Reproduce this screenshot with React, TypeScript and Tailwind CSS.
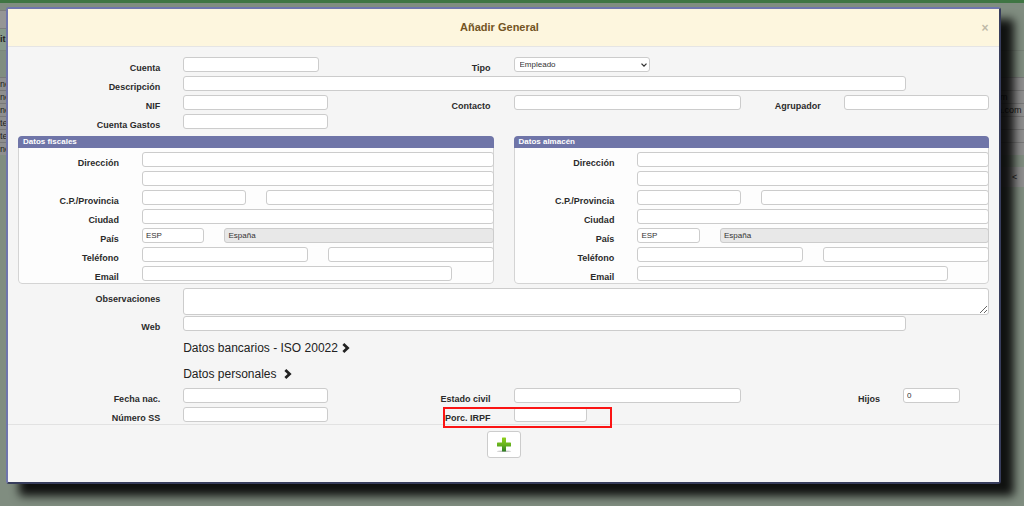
import React, { useId } from "react";
import { clsx } from "clsx";

const controlClass =
  "block h-[15px] rounded-[3px] border border-[#ccc] bg-white px-[3px] text-[8px] leading-[13px] text-[#333] outline-none";

interface FieldProps {
  label: string;
  labelClass?: string;
  fieldClass?: string;
  children: (id: string) => React.ReactNode;
}

const Field = ({
  label,
  labelClass = "col-span-4",
  fieldClass = "col-span-4",
  children,
}: FieldProps) => {
  const id = useId();

  return (
    <>
      <label
        htmlFor={id}
        className={clsx(
          "pt-1 pr-[13px] text-right text-[9px] leading-[15px] font-bold whitespace-nowrap",
          labelClass,
        )}
      >
        {label}
      </label>
      <div className={clsx("px-2.5", fieldClass)}>{children(id)}</div>
    </>
  );
};

const Row = ({ children }: { children: React.ReactNode }) => (
  <div className="grid grid-cols-24 items-start">{children}</div>
);

const TextInput = ({
  className = "w-full",
  ...props
}: React.InputHTMLAttributes<HTMLInputElement>) => (
  <input type="text" className={clsx(controlClass, className)} {...props} />
);

const AddressPanel = ({ title }: { title: string }) => {
  return (
    <fieldset className="min-w-0 rounded-[4px] border border-[#d4d4d4] bg-[#fdfdfd]">
      <h3 className="-mx-px -mt-px h-3 rounded-t-[4px] bg-[#6f75a8] px-[5px] text-[8px] leading-3 font-bold text-white">
        {title}
      </h3>
      <div className="-mx-[11px] -mb-0.5 pt-1">
        <Row>
          <Field label="Dirección" labelClass="col-span-6" fieldClass="col-span-18">
            {(id) => <TextInput id={id} />}
          </Field>
        </Row>
        <Row>
          <div className="col-span-18 col-start-7 px-2.5 pb-1">
            <TextInput aria-label="Dirección 2" />
          </div>
        </Row>
        <Row>
          <Field label="C.P./Provincia" labelClass="col-span-6" fieldClass="col-span-6">
            {(id) => <TextInput id={id} />}
          </Field>
          <div className="col-span-12 px-2.5">
            <TextInput aria-label="Provincia" />
          </div>
        </Row>
        <Row>
          <Field label="Ciudad" labelClass="col-span-6" fieldClass="col-span-18">
            {(id) => <TextInput id={id} />}
          </Field>
        </Row>
        <Row>
          <Field label="País" labelClass="col-span-6" fieldClass="col-span-4">
            {(id) => <TextInput id={id} defaultValue="ESP" />}
          </Field>
          <div className="col-span-14 px-2.5">
            <input
              type="text"
              readOnly
              aria-label="Nombre del país"
              defaultValue="España"
              className="block h-[15px] w-full rounded-[3px] border border-[#ccc] bg-[#e8e8e8] px-[3px] text-[8px] leading-[13px] text-[#333] outline-none"
            />
          </div>
        </Row>
        <Row>
          <Field label="Teléfono" labelClass="col-span-6" fieldClass="col-span-9">
            {(id) => <TextInput id={id} />}
          </Field>
          <div className="col-span-9 px-2.5">
            <TextInput aria-label="Teléfono 2" />
          </div>
        </Row>
        <Row>
          <Field label="Email" labelClass="col-span-6" fieldClass="col-span-16">
            {(id) => <TextInput id={id} />}
          </Field>
        </Row>
      </div>
    </fieldset>
  );
};

const ChevronRight = () => (
  <svg viewBox="0 0 8 10" className="h-2.5 w-2" fill="currentColor" aria-hidden="true">
    <path d="M0.4 1.9 2.3 0 7.6 5 2.3 10 0.4 8.1 3.6 5Z" />
  </svg>
);

const PlusIcon = () => (
  <svg viewBox="0 0 16 16" className="size-4" aria-hidden="true">
    <defs>
      <linearGradient id="plus" x1="0" y1="0" x2="0" y2="1">
        <stop offset="0" stopColor="#8fd11c" />
        <stop offset="0.55" stopColor="#64b01e" />
        <stop offset="1" stopColor="#2c7a24" />
      </linearGradient>
    </defs>
    <ellipse cx="8" cy="14.2" rx="7.2" ry="0.8" fill="#c4c4c4" />
    <path
      d="M6.6 0.5h2.8q.6 0 .6.6V5.5h4.4q.6 0 .6.6v2.8q0 .6-.6.6H10v4.4q0 .6-.6.6H6.6q-.6 0-.6-.6V9.5H1.6q-.6 0-.6-.6V6.1q0-.6.6-.6H6V1.1q0-.6.6-.6Z"
      fill="url(#plus)"
    />
  </svg>
);

const SectionToggle = ({ children }: { children: React.ReactNode }) => (
  <Row>
    <h4 className="col-span-20 col-start-5 px-2.5 text-[12px] leading-[26px] text-[#222]">
      <button type="button" className="flex items-center gap-1 whitespace-pre">
        {children}
        <ChevronRight />
      </button>
    </h4>
  </Row>
);

const leftRows = ["ne", "ne", "ne", "te", "te", "ne"];
const rightRows = ["", "m", "ella.com", "", "", ""];

// Dimmed list that stays visible behind the dialog
const ListBehind = () => (
  <div className="overflow-hidden text-[9px] text-[#222]">
    <div className="h-[3px] bg-[#3f7543]" />
    <div className="flex justify-between pt-[7px]">
      <div className="w-8">
        <div className="h-[19px] border-y border-[#7d7d7d] bg-[#959595]" />
        <div className="h-[21px] bg-[#86998a] leading-5 font-bold">it:</div>
        <div className="h-[27px] border-t border-[#7b867b]" />
        {leftRows.map((text, i) => (
          <div key={i} className="h-[13px] border-t border-[#787878] bg-[#8e8e8e] leading-3">
            {text}
          </div>
        ))}
      </div>
      <div className="w-9 pt-10">
        <div className="h-[27px] border-t border-[#778277]" />
        {rightRows.map((text, i) => (
          <div
            key={i}
            className={clsx(
              "h-[13px] border-t border-[#787878] bg-[#8e8e8e] leading-3",
              text === "m" && "pl-3",
            )}
          >
            {text}
          </div>
        ))}
        <div className="mt-3 h-5 bg-[#8e8e8e] pl-6 leading-5">&lt;</div>
      </div>
    </div>
  </div>
);

const App = () => {
  return (
    <div className="relative min-h-screen overflow-hidden bg-[#808d80] font-['Liberation_Sans',Arial,sans-serif] text-[#2b2b2b]">
      <ListBehind />

      <div
        role="dialog"
        aria-labelledby="dialog-title"
        className="absolute top-[7px] right-[23px] left-1.5 rounded-[3px] border-2 border-t-[#6f75ac] border-r-[#373d5c] border-b-[#373d5c] border-l-[#6f75ac] bg-[#f5f5f5] shadow-[13px_12px_10px_rgba(0,0,0,0.88)]"
      >
        <header className="flex h-[38px] items-center border-b border-[#e5e5e5] bg-[#fdf6de] px-2.5">
          <h2
            id="dialog-title"
            className="flex-1 text-center text-[11px] font-bold text-[#735423]"
          >
            Añadir General
          </h2>
          <button
            type="button"
            aria-label="Cerrar"
            className="w-2 text-[12px] leading-3 font-bold text-[#bfb9a8]"
          >
            ×
          </button>
        </header>

        <form>
          <div className="pt-2.5">
            <Row>
              <Field label="Cuenta">{(id) => <TextInput id={id} className="w-[136px]" />}</Field>
              <Field label="Tipo">
                {(id) => (
                  <div className="relative w-[136px]">
                    <select
                      id={id}
                      className="block h-[15px] w-full appearance-none rounded-[3px] border border-[#ccc] bg-white px-[5px] text-[8px] leading-[13px] text-[#333]"
                    >
                      <option>Empleado</option>
                    </select>
                    <svg
                      viewBox="0 0 6 4"
                      className="pointer-events-none absolute top-[6px] right-[3px] h-1 w-1.5"
                      fill="none"
                      stroke="#333"
                      strokeWidth="1.3"
                      aria-hidden="true"
                    >
                      <path d="M0.5 0.6 3 3.1 5.5 0.6" />
                    </svg>
                  </div>
                )}
              </Field>
            </Row>
            <Row>
              <Field label="Descripción" fieldClass="col-span-18">
                {(id) => <TextInput id={id} />}
              </Field>
            </Row>
            <Row>
              <Field label="NIF">{(id) => <TextInput id={id} />}</Field>
              <Field label="Contacto" fieldClass="col-span-6">
                {(id) => <TextInput id={id} />}
              </Field>
              <Field label="Agrupador" labelClass="col-span-2">
                {(id) => <TextInput id={id} />}
              </Field>
            </Row>
            <Row>
              <Field label="Cuenta Gastos">{(id) => <TextInput id={id} />}</Field>
            </Row>

            <div className="mt-[3px] grid grid-cols-2 gap-5 px-2.5">
              <AddressPanel title="Datos fiscales" />
              <AddressPanel title="Datos almacén" />
            </div>

            <div className="mt-1">
              <Row>
                <Field label="Observaciones" fieldClass="col-span-20">
                  {(id) => (
                    <textarea
                      id={id}
                      className="mb-px block h-[27px] w-full rounded-[3px] border border-[#ccc] bg-white px-[3px] text-[8px]"
                    />
                  )}
                </Field>
              </Row>
              <Row>
                <Field label="Web" fieldClass="col-span-18">
                  {(id) => <TextInput id={id} />}
                </Field>
              </Row>
            </div>

            <SectionToggle>Datos bancarios - ISO 20022</SectionToggle>
            <SectionToggle>{"Datos personales "}</SectionToggle>

            <div className="pt-px">
              <Row>
                <Field label="Fecha nac.">{(id) => <TextInput id={id} />}</Field>
                <Field label="Estado civil" fieldClass="col-span-6">
                  {(id) => <TextInput id={id} />}
                </Field>
                <div className="col-span-6 flex pr-[29px]">
                  <Field label="Hijos" labelClass="flex-1" fieldClass="flex-none">
                    {(id) => <TextInput id={id} defaultValue="0" className="w-[57px]" />}
                  </Field>
                </div>
              </Row>
              <Row>
                <Field label="Número SS">{(id) => <TextInput id={id} />}</Field>
                <Field label="Porc. IRPF" fieldClass="relative col-span-4">
                  {(id) => (
                    <>
                      <TextInput id={id} className="w-[73px]" />
                      <div className="pointer-events-none absolute top-0 -left-[61px] h-[21px] w-[169px] border-2 border-[#fb1414]" />
                    </>
                  )}
                </Field>
              </Row>
            </div>
          </div>

          <footer className="-mt-0.5 flex justify-center border-t border-[#e2e2e2] pt-1.5 pb-6">
            <button
              type="button"
              aria-label="Añadir"
              className="flex h-[27px] w-[34px] items-center justify-center rounded-[3px] border border-[#ccc] bg-white"
            >
              <PlusIcon />
            </button>
          </footer>
        </form>
      </div>
    </div>
  );
};

export default App;
